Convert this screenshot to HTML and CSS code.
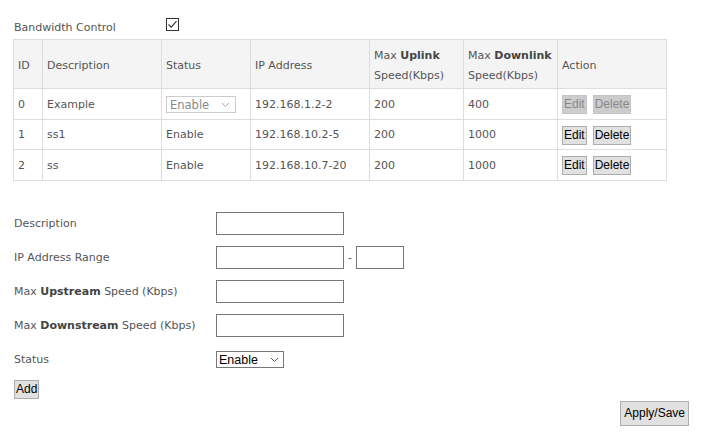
FILE: index.html
```html
<!DOCTYPE html>
<html>
<head>
<meta charset="utf-8">
<link rel="stylesheet" href="styles.css">
</head>
<body>
<div class="page">
  <div class="bw-row">
    <span class="bw-label">Bandwidth Control</span>
    <span class="check">
      <svg width="13" height="13" viewBox="0 0 13 13"><rect x="0.5" y="0.5" width="12" height="12" fill="#fff" stroke="#333"/><path d="M2.5 6.5 L5.2 9.2 L10.5 3.2" fill="none" stroke="#333" stroke-width="1.1"/></svg>
    </span>
  </div>

  <table class="rules">
    <colgroup>
      <col class="c-id"><col class="c-desc"><col class="c-status"><col class="c-ip"><col class="c-up"><col class="c-down"><col class="c-act">
    </colgroup>
    <tr class="head">
      <td>ID</td><td>Description</td><td>Status</td><td>IP Address</td>
      <td>Max <b>Uplink</b><br>Speed(Kbps)</td>
      <td>Max <b>Downlink</b><br>Speed(Kbps)</td>
      <td>Action</td>
    </tr>
    <tr>
      <td>0</td><td>Example</td>
      <td><span class="mini-select">Enable<svg width="9" height="6" viewBox="0 0 9 6"><path d="M1 1 L4.5 4.5 L8 1" fill="none" stroke="#aaa" stroke-width="1"/></svg></span></td>
      <td>192.168.1.2-2</td><td>200</td><td>400</td>
      <td class="act"><button class="btn off">Edit</button><button class="btn off">Delete</button></td>
    </tr>
    <tr class="short">
      <td>1</td><td>ss1</td><td>Enable</td><td>192.168.10.2-5</td><td>200</td><td>1000</td>
      <td class="act"><button class="btn">Edit</button><button class="btn">Delete</button></td>
    </tr>
    <tr>
      <td>2</td><td>ss</td><td>Enable</td><td>192.168.10.7-20</td><td>200</td><td>1000</td>
      <td class="act"><button class="btn">Edit</button><button class="btn">Delete</button></td>
    </tr>
  </table>

  <div class="form">
    <div class="f-label"><span>Description</span></div>
    <div class="f-field"><span class="input"></span></div>
    <div class="f-label"><span>IP Address Range</span></div>
    <div class="f-field"><span class="input"></span><span class="dash">-</span><span class="input small"></span></div>
    <div class="f-label"><span>Max <b>Upstream</b> Speed (Kbps)</span></div>
    <div class="f-field"><span class="input"></span></div>
    <div class="f-label"><span>Max <b>Downstream</b> Speed (Kbps)</span></div>
    <div class="f-field"><span class="input"></span></div>
    <div class="f-label"><span>Status</span></div>
    <div class="f-field"><span class="select">Enable<svg width="9" height="6" viewBox="0 0 9 6"><path d="M1 1 L4.5 4.5 L8 1" fill="none" stroke="#555" stroke-width="1"/></svg></span></div>
  </div>

  <div class="add-row"><button class="btn add">Add</button></div>
  <div class="save-row"><button class="btn save">Apply/Save</button></div>
</div>
</body>
</html>
```

FILE: styles.css
```css
html, body {
  margin: 0;
  padding: 0;
  background: #fff;
}
.page {
  font-family: "DejaVu Sans", Tahoma, sans-serif;
  font-size: 11px;
  color: #555;
  padding: 18px 20px 0 13px;
  width: 676px;
}
b { color: #444; }
.bw-row {
  display: flex;
  align-items: flex-start;
  height: 14px;
  padding-left: 1px;
}
.bw-label { width: 152px; padding-top: 3px; }
.check { display: flex; height: 13px; }
.check svg { display: block; }

.rules {
  border-collapse: collapse;
  width: 654px;
  margin-top: 7px;
  table-layout: fixed;
}
.c-id { width: 29px; }
.c-desc { width: 119px; }
.c-status { width: 89px; }
.c-ip { width: 119px; }
.c-up { width: 94px; }
.c-down { width: 94px; }
.c-act { width: 109px; }
.rules td {
  border: 1px solid #ddd;
  padding: 1px 0 0 4px;
  height: 29px;
  line-height: 14px;
}
.rules tr.short td { height: 28px; }
.rules tr.head td {
  background: #f4f4f4;
  height: 45px;
  padding-top: 3px;
  line-height: 20px;
}
.mini-select {
  display: inline-flex;
  align-items: center;
  justify-content: space-between;
  box-sizing: border-box;
  width: 70px;
  height: 17px;
  border: 1px solid #ccc;
  padding: 0 5px 0 3px;
  color: #888;
  font-size: 11.5px;
}
.btn {
  font-family: "Liberation Sans", Arial, sans-serif;
  font-size: 12px;
  color: #000;
  background: #e1e1e1;
  border: 1px solid #adadad;
  padding: 1px 1px;
  margin: 0;
  line-height: 15px;
}
.btn.off {
  background: #ccc;
  border-color: #c4c4c4;
  color: #888;
}
.act .btn + .btn { margin-left: 6px; }
.act { padding-left: 4px !important; }

.form {
  display: grid;
  grid-template-columns: 202px 1fr;
  row-gap: 11px;
  margin-top: 31px;
  padding-left: 1px;
}
.f-label, .f-field {
  height: 23px;
  display: flex;
  align-items: center;
}
.input {
  display: inline-block;
  box-sizing: border-box;
  width: 128px;
  height: 23px;
  border: 1px solid #777;
}
.input.small { width: 48px; }
.dash { width: 12px; text-align: center; }
.select {
  display: inline-flex;
  align-items: center;
  justify-content: space-between;
  box-sizing: border-box;
  width: 68px;
  height: 17px;
  border: 1px solid #777;
  padding: 0 4px 0 2px;
  font-family: "Liberation Sans", Arial, sans-serif;
  font-size: 12.5px;
  color: #000;
}
.add-row { margin-top: 9px; padding-left: 1px; }
.btn.add { padding: 1px 1px; }
.save-row { display: flex; justify-content: flex-end; margin-top: 2px; }
.btn.save { padding: 4px 3px; }
```
